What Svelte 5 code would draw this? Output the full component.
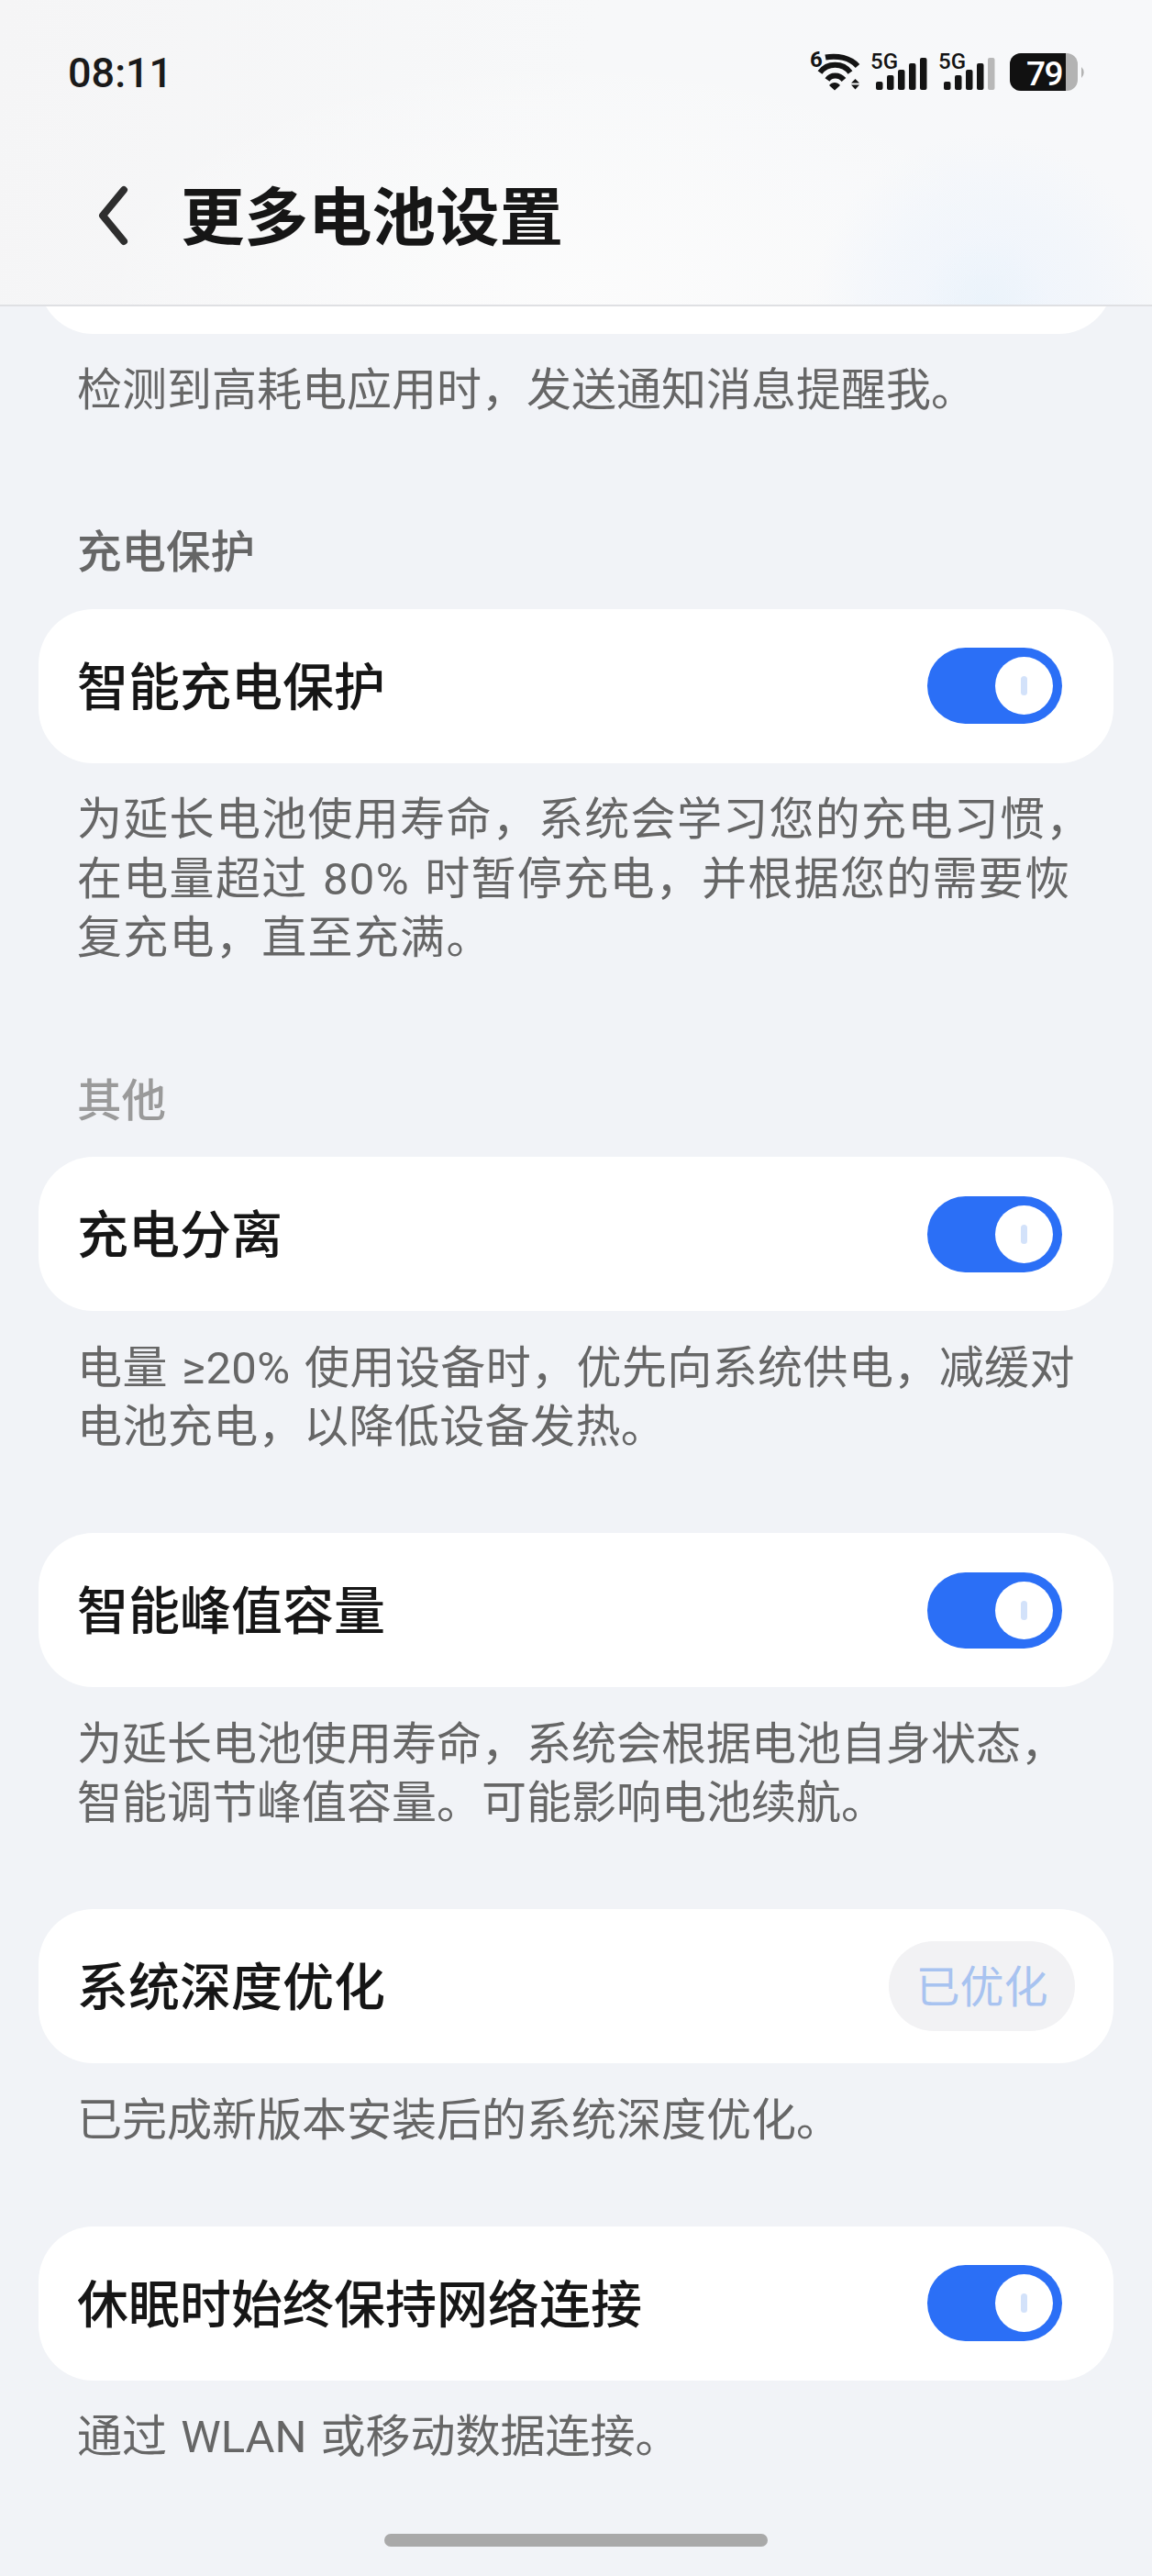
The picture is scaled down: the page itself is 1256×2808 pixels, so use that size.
<script>
  const sections = [
    { label: '充电保护', tone: 'dark', title: '智能充电保护', toggle: true, spacing: 1.3, lines: ['为延长电池使用寿命，系统会学习您的充电习惯，', '在电量超过 80% 时暂停充电，并根据您的需要恢', '复充电，直至充满。'] },
    { label: '其他', tone: 'light', title: '充电分离', toggle: true, spacing: 0.4, lines: ['电量 ≥20% 使用设备时，优先向系统供电，减缓对', '电池充电，以降低设备发热。'] },
    { title: '智能峰值容量', toggle: true, spacing: 0, lines: ['为延长电池使用寿命，系统会根据电池自身状态，', '智能调节峰值容量。可能影响电池续航。'] },
    { title: '系统深度优化', pill: '已优化', spacing: 0, lines: ['已完成新版本安装后的系统深度优化。'] },
    { title: '休眠时始终保持网络连接', toggle: true, spacing: 0, lines: ['通过 WLAN 或移动数据连接。'] }
  ];
  const bars = [[6, 9], [18, 16], [30, 22], [42, 29], [54, 35]];
</script>

{#snippet signal(dim)}
  <svg class="signal" width="62" height="50" viewBox="0 -8 62 50" aria-hidden="true">
    <text x="0" y="17" class="five">5G</text>
    {#each bars as b, i}
      <rect x={b[0]} y={40 - b[1]} width="7.5" height={b[1]} rx="2" fill={dim && i === 4 ? '#b8b8b8' : '#141414'} />
    {/each}
  </svg>
{/snippet}

<div class="page">
  <header class="head">
    <div class="status">
      <span class="time">08:11</span>
      <div class="icons">
        <svg class="wifi" width="56" height="50" viewBox="0 -6 56 50" aria-hidden="true">
          <text x="0" y="18" class="six">6</text>
          <g fill="none" stroke="#141414" stroke-width="6">
            <path d="M17 7.500 C 30 5 44 8 52 17" />
            <path d="M11 24 C 19 13 36 13 44 24" />
            <path d="M19 32 C 23 26 32 26 37 32" />
          </g>
          <path d="M21 38 C 24 34 30 34 33 38 L27 43.500 Z" fill="#141414" />
          <path d="M45 35.500 L49.500 31 L54 35.500 Z M45 37.500 L54 37.500 L49.500 42.500 Z" fill="#141414" />
        </svg>
        <div class="sigs">
          {@render signal(false)}
          {@render signal(true)}
        </div>
        <svg class="batt" width="82" height="42" viewBox="0 0 82 42" aria-hidden="true">
          <rect x="0" y="0" width="74" height="41" rx="12" fill="#b3b3b3" />
          <path d="M12 0 H61 V41 H12 A12 12 0 0 1 0 29 V12 A12 12 0 0 1 12 0 Z" fill="#111" />
          <path d="M78 15 A 8 8 0 0 1 78 27 Z" fill="#b3b3b3" />
          <text x="18" y="34.500" class="pct">79</text>
        </svg>
      </div>
    </div>
    <div class="bar">
      <svg class="back" width="34" height="66" viewBox="0 0 34 66" aria-hidden="true">
        <path d="M29 5 L6 33 L29 61" fill="none" stroke="#2e2e2e" stroke-width="8" stroke-linecap="round" stroke-linejoin="round" />
      </svg>
      <h1>更多电池设置</h1>
    </div>
  </header>

  <main class="main">
    <div class="stub"><div class="card"></div></div>
    <p class="desc">检测到高耗电应用时，发送通知消息提醒我。</p>

    {#each sections as s}
      <section class="sec" class:labelled={s.label}>
        {#if s.label}<h2 class={s.tone}>{s.label}</h2>{/if}
        <div class="card">
          <span class="ttl">{s.title}</span>
          {#if s.toggle}
            <span class="toggle"><span class="knob"><span class="tick"></span></span></span>
          {:else}
            <span class="pill">{s.pill}</span>
          {/if}
        </div>
        <p class="desc" style="letter-spacing:{s.spacing}px">{#each s.lines as l}<span class="line">{l}</span>{/each}</p>
      </section>
    {/each}

    <div class="home"></div>
  </main>
</div>

<style>
  :global(body) {
    margin: 0;
    background: #f1f3f7;
  }
  .page {
    width: 1256px;
    height: 2808px;
    overflow: hidden;
    background: #f1f3f7;
    font-family: "Noto Sans CJK SC", "Noto Sans", sans-serif;
    color: #161616;
  }
  .head {
    height: 332px;
    border-bottom: 2px solid #dfe0e3;
    background:
      radial-gradient(ellipse 70px 80px at 1075px 335px, rgba(232, 243, 250, 0.6), rgba(232, 243, 250, 0) 100%),
      radial-gradient(ellipse 190px 190px at 1075px 335px, rgba(236, 243, 253, 0.75), rgba(238, 244, 252, 0.5) 60%, rgba(240, 245, 252, 0) 100%),
      radial-gradient(ellipse 520px 260px at 620px 320px, rgba(252, 252, 252, 0.9), rgba(252, 252, 252, 0) 100%),
      linear-gradient(100deg, #f5f5f6 0%, #f7f8f9 50%, #f7f8fa 100%);
  }
  .status {
    height: 166px;
    display: flex;
    justify-content: space-between;
    align-items: flex-start;
    padding: 54px 73px 0 74px;
    box-sizing: border-box;
  }
  .time {
    font-family: Roboto, sans-serif;
    font-weight: 500;
    font-size: 45px;
    line-height: 52px;
    color: #1a1a1a;
  }
  .icons {
    display: flex;
    align-items: flex-start;
  }
  .wifi {
    margin-top: -5px;
  }
  .sigs {
    display: flex;
    gap: 12px;
    margin-left: 10px;
    margin-top: -4px;
  }
  .batt {
    margin-left: 16px;
    margin-top: 4px;
  }
  .five {
    font-family: Roboto, sans-serif;
    font-size: 24px;
    font-weight: 500;
    fill: #141414;
  }
  .six {
    font-family: Roboto, sans-serif;
    font-size: 24px;
    font-weight: 700;
    fill: #141414;
  }
  .pct {
    font-family: Roboto, sans-serif;
    font-size: 37px;
    font-weight: 500;
    letter-spacing: -1.500px;
    fill: #fff;
  }
  .bar {
    display: flex;
    align-items: center;
    padding: 30px 0 0 106px;
    gap: 57px;
  }
  .back {
    flex: none;
  }
  h1 {
    margin: 0 0 5px;
    font-size: 69.500px;
    font-weight: 700;
    line-height: 72px;
    color: #161616;
    white-space: nowrap;
  }
  .main {
    padding: 0 42px;
  }
  .stub {
    height: 30px;
    overflow: hidden;
    display: flex;
    flex-direction: column;
    justify-content: flex-end;
  }
  .stub .card {
    flex: none;
  }
  .card {
    height: 168px;
    box-sizing: border-box;
    background: #fff;
    border-radius: 60px;
    display: flex;
    align-items: center;
    justify-content: space-between;
    padding: 0 42px;
  }
  .ttl {
    font-size: 56px;
    font-weight: 500;
    line-height: 64px;
    padding-bottom: 6px;
    color: #161616;
    white-space: nowrap;
  }
  .toggle {
    width: 147px;
    height: 83px;
    margin-right: 14px;
    border-radius: 42px;
    background: #2b6ff6;
    display: flex;
    align-items: center;
    justify-content: flex-end;
    padding-right: 10px;
    box-sizing: border-box;
  }
  .knob {
    width: 63px;
    height: 63px;
    border-radius: 50%;
    background: #fff;
    display: flex;
    align-items: center;
    justify-content: center;
  }
  .tick {
    width: 7px;
    height: 21px;
    border-radius: 4px;
    background: #d3e2fa;
  }
  .pill {
    width: 203px;
    height: 98px;
    border-radius: 49px;
    background: #f2f2f4;
    color: #a8c3f0;
    font-size: 48px;
    line-height: 92px;
    text-align: center;
  }
  .desc {
    margin: 29.500px 0 0;
    padding-left: 42px;
    font-family: Roboto, "Noto Sans CJK SC", sans-serif;
    font-size: 49px;
    line-height: 64.500px;
    word-spacing: 3px;
    color: #666;
    white-space: nowrap;
  }
  .line {
    display: block;
  }
  .sec {
    margin-top: 82.500px;
  }
  .sec.labelled {
    margin-top: 108px;
  }
  h2 {
    margin: 0 0 33.500px;
    padding-left: 42px;
    font-size: 48.500px;
    font-weight: 500;
    line-height: 64px;
  }
  h2.dark {
    color: #666;
  }
  h2.light {
    color: #9a9a9a;
  }
  .sec .desc {
    margin-top: 30.500px;
  }
  .home {
    width: 418px;
    height: 14px;
    border-radius: 7px;
    background: #a9a9a9;
    margin: 72.500px auto 0;
  }
</style>
